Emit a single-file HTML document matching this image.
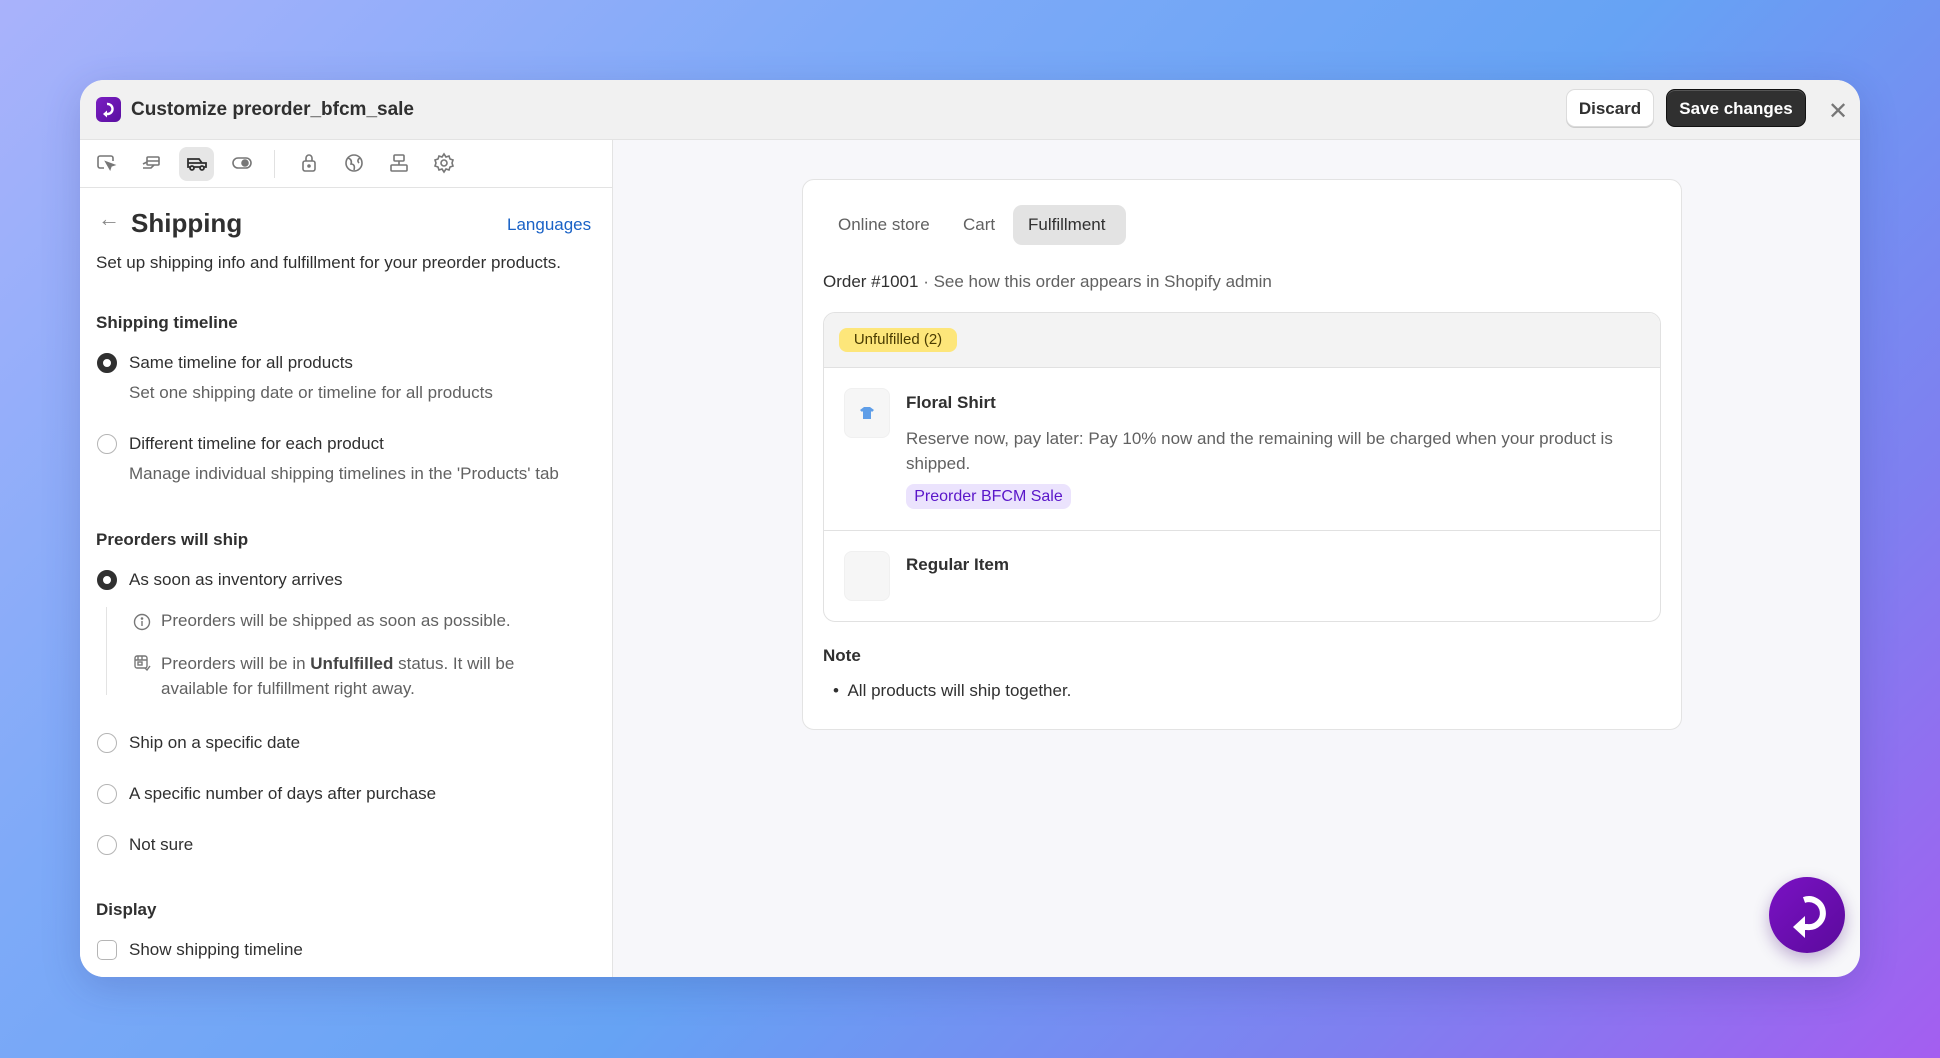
<!DOCTYPE html>
<html><head><meta charset="utf-8"><style>
*{box-sizing:border-box;margin:0;padding:0}
html,body{width:1940px;height:1058px;overflow:hidden}
body{font-family:"Liberation Sans",sans-serif;color:#303030;position:relative;
background:linear-gradient(135deg,#a9b2fb 0%,#7eaaf8 30%,#66a3f4 55%,#7f7ff0 80%,#a45ef0 100%);}
.win{position:absolute;left:80px;top:80px;width:1780px;height:897px;background:#f7f7fa;border-radius:24px;overflow:hidden;box-shadow:0 10px 40px rgba(40,40,120,.2)}
.hdr{position:absolute;left:0;top:0;width:100%;height:60px;background:#f1f1f1;border-bottom:1px solid #e3e3e3}
.logo{position:absolute;left:16px;top:17px;width:25px;height:25px;border-radius:6px;background:linear-gradient(135deg,#7a1fc2,#5a0fa0)}
.title{position:absolute;left:51px;top:19px;font-size:19px;font-weight:600;color:#303030}
.btn{position:absolute;top:9px;height:38px;border-radius:9px;font-size:17px;font-weight:600;line-height:38px;text-align:center}
.disc{left:1486px;width:88px;background:#fff;border:1px solid #dcdcdc;box-shadow:0 1px 0 #ccc}
.save{left:1586px;width:140px;background:#303030;color:#fff;border:1px solid #111;box-shadow:inset 0 1px 0 #555}
.x{position:absolute;left:1748px;top:17px;font-size:24px;color:#777}
.left{position:absolute;left:0;top:60px;width:533px;height:837px;background:#fff;border-right:1px solid #e3e3e3}
.tb{position:absolute;left:0;top:0;width:100%;height:48px;border-bottom:1px solid #e3e3e3}
.ic{position:absolute;top:12px;width:22px;height:22px}
.act{position:absolute;left:99px;top:7px;width:35px;height:34px;background:#e6e6e6;border-radius:8px}
.t{position:absolute;white-space:nowrap}
.s17{font-size:17px}
.g{color:#616161}
.b{font-weight:600}
.rad{position:absolute;width:20px;height:20px;border-radius:50%;border:1px solid #b5b5b5;background:#fff}
.rad.on{border:6px solid #303030}
.card{position:absolute;left:802px;top:179px;width:880px;height:551px;background:#fff;border:1px solid #e3e3e3;border-radius:12px}
.inner{position:absolute;left:20px;top:132px;width:838px;height:310px;border:1px solid #e1e1e1;border-radius:12px;overflow:hidden}
.thumb{position:absolute;width:46px;height:50px;border-radius:8px;background:#f6f6f6;border:1px solid #f0f0f0}
.fab{position:absolute;left:1769px;top:877px;width:76px;height:76px;border-radius:50%;background:linear-gradient(135deg,#7a12c4,#5b0a9c);box-shadow:0 6px 16px rgba(60,0,120,.3)}
</style></head><body>
<div class="win">
 <div class="hdr">
  <div class="logo"><svg width="25" height="25" viewBox="0 0 25 25"><path d="M11 7 A5 5 0 1 1 12 17 L9 17" stroke="#fff" stroke-width="2.4" fill="none"/><path d="M7 17 L11 13.5 L11 20.5Z" fill="#fff"/></svg></div>
  <div class="title">Customize preorder_bfcm_sale</div>
  <div class="btn disc">Discard</div>
  <div class="btn save">Save changes</div>
  <div class="x">✕</div>
 </div>
 <div class="left">
  <div class="tb">
   <div class="act"></div>
   <svg class="ic" style="left:15px" viewBox="0 0 22 22" fill="none" stroke="#777" stroke-width="1.6"><path d="M9 16H5a2 2 0 0 1-2-2V6a2 2 0 0 1 2-2h11a2 2 0 0 1 2 2v3"/><path d="M11 10l8 3-3 1-1 3z" fill="#777"/></svg>
   <svg class="ic" style="left:60px" viewBox="0 0 22 22" fill="none" stroke="#777" stroke-width="1.6"><rect x="7" y="5" width="12" height="8" rx="1"/><path d="M3 12l4-2M3 16h8l3-3M7 9h12"/></svg>
   <svg class="ic" style="left:106px" viewBox="0 0 22 22" fill="none" stroke="#303030" stroke-width="1.8"><path d="M2 7h11l3 4h4v4H2zM2 11h18"/><circle cx="6" cy="16" r="2" fill="#e6e6e6"/><circle cx="16" cy="16" r="2" fill="#e6e6e6"/></svg>
   <svg class="ic" style="left:151px" viewBox="0 0 22 22" fill="none" stroke="#777" stroke-width="1.6"><rect x="2" y="6" width="18" height="10" rx="5"/><circle cx="14" cy="11" r="3" fill="#777"/></svg>
   <div style="position:absolute;left:194px;top:10px;width:1px;height:28px;background:#e1e1e1"></div>
   <svg class="ic" style="left:218px" viewBox="0 0 22 22" fill="none" stroke="#777" stroke-width="1.6"><rect x="5" y="9" width="12" height="10" rx="2"/><path d="M8 9V6a3 3 0 0 1 6 0v3"/><circle cx="11" cy="14" r="1" fill="#777"/></svg>
   <svg class="ic" style="left:263px" viewBox="0 0 22 22" fill="none" stroke="#777" stroke-width="1.6"><circle cx="11" cy="11" r="8"/><path d="M5 6c3 1 4 3 3 6 3 0 4 2 3 6M17 6c-2 1-3 3-1 5"/></svg>
   <svg class="ic" style="left:308px" viewBox="0 0 22 22" fill="none" stroke="#777" stroke-width="1.6"><rect x="6" y="3" width="10" height="6" rx="1"/><rect x="3" y="13" width="16" height="6" rx="1"/><path d="M11 9v4"/></svg>
   <svg class="ic" style="left:353px" viewBox="0 0 22 22" fill="none" stroke="#777" stroke-width="1.6"><circle cx="11" cy="11" r="3"/><path d="M11 2l2 3 3-1 1 3 3 1-1 3 1 3-3 1-1 3-3-1-2 3-2-3-3 1-1-3-3-1 1-3-1-3 3-1 1-3 3 1z"/></svg>
  </div>
  <div class="t" style="left:18px;top:66px;font-size:22px;color:#888">←</div>
  <div class="t" style="left:51px;top:68px;font-size:26px;font-weight:700">Shipping</div>
  <div class="t" style="left:427px;top:75px;font-size:17px;color:#1a62c6">Languages</div>
  <div class="t s17" style="left:16px;top:113px">Set up shipping info and fulfillment for your preorder products.</div>
  <div class="t s17 b" style="left:16px;top:173px">Shipping timeline</div>
  <div class="rad on" style="left:17px;top:213px"></div>
  <div class="t s17" style="left:49px;top:213px">Same timeline for all products</div>
  <div class="t s17 g" style="left:49px;top:243px">Set one shipping date or timeline for all products</div>
  <div class="rad" style="left:17px;top:294px"></div>
  <div class="t s17" style="left:49px;top:294px">Different timeline for each product</div>
  <div class="t s17 g" style="left:49px;top:324px">Manage individual shipping timelines in the 'Products' tab</div>
  <div class="t s17 b" style="left:16px;top:390px">Preorders will ship</div>
  <div class="rad on" style="left:17px;top:430px"></div>
  <div class="t s17" style="left:49px;top:430px">As soon as inventory arrives</div>
  <div style="position:absolute;left:26px;top:467px;width:1px;height:88px;background:#e3e3e3"></div>
  <svg style="position:absolute;left:53px;top:473px" width="18" height="18" viewBox="0 0 18 18" fill="none" stroke="#777" stroke-width="1.4"><circle cx="9" cy="9" r="7.5"/><path d="M9 8v5"/><circle cx="9" cy="5.5" r=".6" fill="#777"/></svg>
  <div class="t s17 g" style="left:81px;top:471px">Preorders will be shipped as soon as possible.</div>
  <svg style="position:absolute;left:53px;top:513px" width="18" height="18" viewBox="0 0 18 18" fill="none" stroke="#777" stroke-width="1.4"><rect x="2" y="3" width="12" height="12" rx="2"/><path d="M2 7h12M5 3v4M9 3v4"/><rect x="5" y="9" width="4" height="3"/><path d="M12 15l2 2 3-4"/></svg>
  <div class="t s17 g" style="left:81px;top:511px;line-height:25px">Preorders will be in <b style="color:#444">Unfulfilled</b> status. It will be<br>available for fulfillment right away.</div>
  <div class="rad" style="left:17px;top:593px"></div>
  <div class="t s17" style="left:49px;top:593px">Ship on a specific date</div>
  <div class="rad" style="left:17px;top:644px"></div>
  <div class="t s17" style="left:49px;top:644px">A specific number of days after purchase</div>
  <div class="rad" style="left:17px;top:695px"></div>
  <div class="t s17" style="left:49px;top:695px">Not sure</div>
  <div class="t s17 b" style="left:16px;top:760px">Display</div>
  <div style="position:absolute;left:17px;top:800px;width:20px;height:20px;border:1px solid #b5b5b5;border-radius:5px"></div>
  <div class="t s17" style="left:49px;top:800px">Show shipping timeline</div>
 </div>
</div>
<div class="card">
 <div class="t s17 g" style="left:35px;top:35px">Online store</div>
 <div class="t s17 g" style="left:160px;top:35px">Cart</div>
 <div style="position:absolute;left:210px;top:25px;width:113px;height:40px;border-radius:9px;background:#e3e3e3"></div>
 <div class="t s17" style="left:225px;top:35px;font-weight:500">Fulfillment</div>
 <div class="t s17" style="left:20px;top:92px">Order #1001 <span class="g">· See how this order appears in Shopify admin</span></div>
 <div class="inner">
  <div style="position:absolute;left:0;top:0;width:100%;height:55px;background:#f3f3f3;border-bottom:1px solid #e1e1e1"></div>
  <div class="t" style="left:15px;top:15px;height:24px;width:118px;background:#fde67a;border-radius:8px;font-size:15px;line-height:24px;text-align:center;color:#4a3c00">Unfulfilled (2)</div>
  <div class="thumb" style="left:20px;top:75px"><svg style="position:absolute;left:14px;top:16px" width="16" height="16" viewBox="0 0 16 16"><path d="M5 2h6l4 3-2 2-1-1v8H4V6L3 7 1 5z" fill="#5f9ee8"/></svg></div>
  <div class="t s17 b" style="left:82px;top:80px">Floral Shirt</div>
  <div class="t s17 g" style="left:82px;top:113px;line-height:25px">Reserve now, pay later: Pay 10% now and the remaining will be charged when your product is<br>shipped.</div>
  <div class="t" style="left:82px;top:171px;height:25px;width:165px;background:#ebe3fd;border-radius:8px;font-size:16px;line-height:25px;text-align:center;color:#5a16c9">Preorder BFCM Sale</div>
  <div style="position:absolute;left:0;top:217px;width:100%;height:1px;background:#e1e1e1"></div>
  <div class="thumb" style="left:20px;top:238px"></div>
  <div class="t s17 b" style="left:82px;top:242px">Regular Item</div>
 </div>
 <div class="t s17 b" style="left:20px;top:466px">Note</div>
 <div class="t s17" style="left:30px;top:501px">•&nbsp; All products will ship together.</div>
</div>
<div class="fab"><svg width="76" height="76" viewBox="0 0 76 76"><path d="M35 23 A14 14 0 1 1 38 50 L32 50" stroke="#fff" stroke-width="6" fill="none"/><path d="M24 50 L36 39 L36 61Z" fill="#fff"/></svg></div>
</body></html>
